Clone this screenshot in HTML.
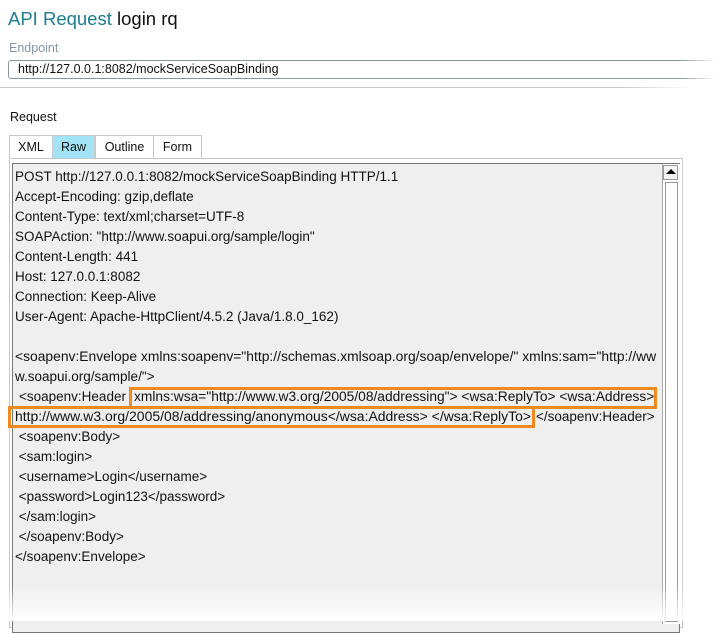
<!DOCTYPE html>
<html><head><meta charset="utf-8"><style>
body{margin:0;width:716px;height:621px;background:#fff;position:relative;overflow:hidden;font-family:"Liberation Sans",sans-serif;}
.a{position:absolute;white-space:pre;}
.t{font-size:13.5px;color:#111;left:15px;line-height:20px;transform-origin:0 50%;}
.tab{position:absolute;top:135px;height:23px;border:1px solid #c8c8c8;border-bottom:none;box-sizing:border-box;font-size:12.5px;line-height:22px;text-align:center;color:#111;background:#fff;}
</style></head><body>
<div class="a" style="left:8px;top:8px;font-size:18.5px;color:#1b7d8f;">API Request</div>
<div class="a" style="left:117px;top:8px;font-size:18.5px;color:#111;">login rq</div>
<div class="a" style="left:9px;top:41px;font-size:12.5px;color:#8a95a3;">Endpoint</div>
<div class="a" style="left:8px;top:60px;width:720px;height:19px;border:1px solid #8a96a6;border-radius:3px;box-sizing:border-box;"></div>
<div class="a" style="left:18px;top:62px;font-size:12.5px;color:#111;">http://127.0.0.1:8082/mockServiceSoapBinding</div>
<div class="a" style="left:0;top:87px;width:690px;height:1px;background:linear-gradient(90deg,#c8c8c8 90%,#fff);"></div>
<div class="a" style="left:10px;top:110px;font-size:12.5px;color:#111;">Request</div>
<div class="tab" style="left:9px;width:44px;">XML</div>
<div class="tab" style="left:52px;width:43px;background:#a2e3f8;">Raw</div>
<div class="tab" style="left:95px;width:59px;">Outline</div>
<div class="tab" style="left:153px;width:49px;">Form</div>
<div class="a" style="left:9px;top:158px;width:674px;height:470px;border:1px solid #c8c8c8;box-sizing:border-box;"></div>
<div class="a" style="left:12px;top:163px;width:668px;height:470px;border:1px solid #777;background:#efefef;box-sizing:border-box;"></div>
<div class="a" style="left:662px;top:164px;width:17px;height:460px;background:#fff;border-left:1px solid #aaa;"></div>
<div class="a" style="left:663px;top:165px;width:15px;height:15px;background:#f3f3f3;border:1px solid #999;box-sizing:border-box;"></div>
<div class="a" style="left:666px;top:169px;width:0;height:0;border-left:5px solid transparent;border-right:5px solid transparent;border-bottom:5px solid #000;"></div>
<div class="a" style="left:665px;top:182px;width:13px;height:440px;border:1px solid #999;box-sizing:border-box;"></div>
<div class="a t" style="top:167px;">POST http://127.0.0.1:8082/mockServiceSoapBinding HTTP/1.1</div>
<div class="a t" style="top:187px;">Accept-Encoding: gzip,deflate</div>
<div class="a t" style="top:207px;">Content-Type: text/xml;charset=UTF-8</div>
<div class="a t" style="top:227px;">SOAPAction: "http://www.soapui.org/sample/login"</div>
<div class="a t" style="top:247px;">Content-Length: 441</div>
<div class="a t" style="top:267px;">Host: 127.0.0.1:8082</div>
<div class="a t" style="top:287px;">Connection: Keep-Alive</div>
<div class="a t" style="top:307px;">User-Agent: Apache-HttpClient/4.5.2 (Java/1.8.0_162)</div>
<div class="a t" style="top:347px;transform:scaleX(1.026);">&lt;soapenv:Envelope xmlns:soapenv="http://schemas.xmlsoap.org/soap/envelope/" xmlns:sam="http://ww</div>
<div class="a t" style="top:367px;">w.soapui.org/sample/"&gt;</div>
<div class="a t" style="top:387px;left:19px;">&lt;soapenv:Header</div>
<div class="a t" style="top:387px;left:134px;transform:scaleX(1.02);">xmlns:wsa="http://www.w3.org/2005/08/addressing"&gt; &lt;wsa:ReplyTo&gt; &lt;wsa:Address&gt;</div>
<div class="a t" style="top:407px;transform:scaleX(1.034);">http://www.w3.org/2005/08/addressing/anonymous&lt;/wsa:Address&gt; &lt;/wsa:ReplyTo&gt;</div>
<div class="a t" style="top:407px;left:536px;">&lt;/soapenv:Header&gt;</div>
<div class="a t" style="top:427px;"> &lt;soapenv:Body&gt;</div>
<div class="a t" style="top:447px;"> &lt;sam:login&gt;</div>
<div class="a t" style="top:467px;"> &lt;username&gt;Login&lt;/username&gt;</div>
<div class="a t" style="top:487px;"> &lt;password&gt;Login123&lt;/password&gt;</div>
<div class="a t" style="top:507px;"> &lt;/sam:login&gt;</div>
<div class="a t" style="top:527px;"> &lt;/soapenv:Body&gt;</div>
<div class="a t" style="top:547px;">&lt;/soapenv:Envelope&gt;</div>
<div class="a" style="left:129px;top:387px;width:528px;height:22px;border:3px solid #f08a1c;box-sizing:border-box;"></div>
<div class="a" style="left:8px;top:406px;width:527px;height:22px;border:3px solid #f08a1c;box-sizing:border-box;"></div>
<div class="a" style="left:0;top:585px;width:716px;height:36px;background:linear-gradient(180deg,rgba(255,255,255,0),#fff);"></div>
<div class="a" style="left:680px;top:0;width:36px;height:621px;background:linear-gradient(90deg,rgba(255,255,255,0),#fff);"></div>
</body></html>
